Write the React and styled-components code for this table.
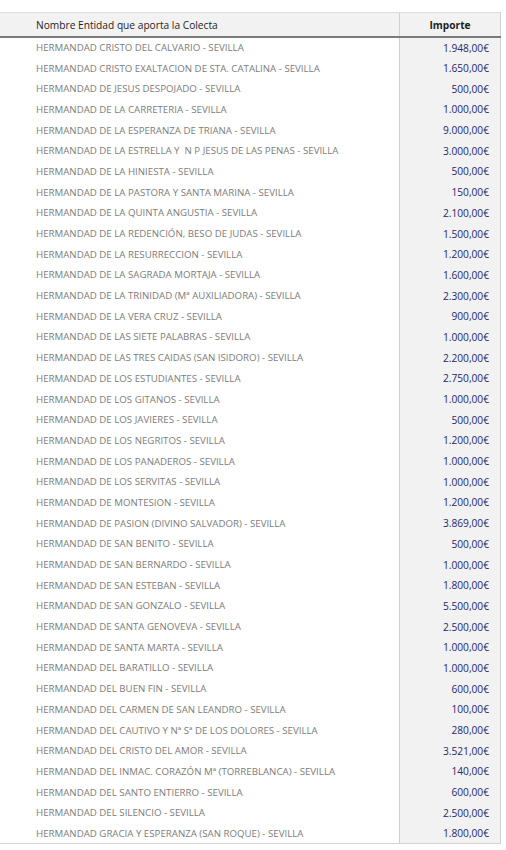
import React from 'react';
import styled, { createGlobalStyle } from 'styled-components';

const GlobalStyle = createGlobalStyle`
  html, body {
    margin: 0;
    padding: 0;
    background: #fff;
  }
  body {
    font-family: "Open Sans", "Liberation Sans", sans-serif;
  }
`;

const Page = styled.div`
  padding-top: 12px;
`;

const Table = styled.table`
  width: 501px;
  border-collapse: collapse;
  table-layout: fixed;
  font-size: 9.7px;
`;

const HeadCell = styled.th`
  height: 23px;
  padding: ${(p) => (p.$amount ? '0' : '0 0 0 36px')};
  background: #f2f2f2;
  border-top: 1px solid #dcdcdc;
  border-bottom: 2px solid #7a7a7a;
  border-left: ${(p) => (p.$amount ? '1px solid #cfcfcf' : 'none')};
  border-right: ${(p) => (p.$amount ? '1px solid #cfcfcf' : 'none')};
  text-align: ${(p) => (p.$amount ? 'center' : 'left')};
  font-weight: ${(p) => (p.$amount ? 700 : 400)};
  font-size: 10.2px;
  color: #1e1e1e;
  width: ${(p) => (p.$amount ? '100px' : 'auto')};
`;

const Row = styled.tr`
  height: 20.7px;
  &:last-child td {
    border-bottom: 1px solid #d4d4d4;
  }
`;

const NameCell = styled.td`
  padding: 0 0 0 36px;
  color: #7c7c7c;
  white-space: nowrap;
  overflow: hidden;
`;

const AmountCell = styled.td`
  padding: 0 11px 0 0;
  text-align: right;
  color: #27276e;
  background: #f2f2f2;
  border-left: 1px solid #cfcfcf;
  border-right: 1px solid #cfcfcf;
  font-size: 10.2px;
`;

const rows = [
  ['HERMANDAD CRISTO DEL CALVARIO - SEVILLA', '1.948,00€'],
  ['HERMANDAD CRISTO EXALTACION DE STA. CATALINA - SEVILLA', '1.650,00€'],
  ['HERMANDAD DE JESUS DESPOJADO - SEVILLA', '500,00€'],
  ['HERMANDAD DE LA CARRETERIA - SEVILLA', '1.000,00€'],
  ['HERMANDAD DE LA ESPERANZA DE TRIANA - SEVILLA', '9.000,00€'],
  ['HERMANDAD DE LA ESTRELLA Y \u00a0N P JESUS DE LAS PENAS - SEVILLA', '3.000,00€'],
  ['HERMANDAD DE LA HINIESTA - SEVILLA', '500,00€'],
  ['HERMANDAD DE LA PASTORA Y SANTA MARINA - SEVILLA', '150,00€'],
  ['HERMANDAD DE LA QUINTA ANGUSTIA - SEVILLA', '2.100,00€'],
  ['HERMANDAD DE LA REDENCIÓN, BESO DE JUDAS - SEVILLA', '1.500,00€'],
  ['HERMANDAD DE LA RESURRECCION - SEVILLA', '1.200,00€'],
  ['HERMANDAD DE LA SAGRADA MORTAJA - SEVILLA', '1.600,00€'],
  ['HERMANDAD DE LA TRINIDAD (Mª AUXILIADORA) - SEVILLA', '2.300,00€'],
  ['HERMANDAD DE LA VERA CRUZ - SEVILLA', '900,00€'],
  ['HERMANDAD DE LAS SIETE PALABRAS - SEVILLA', '1.000,00€'],
  ['HERMANDAD DE LAS TRES CAIDAS (SAN ISIDORO) - SEVILLA', '2.200,00€'],
  ['HERMANDAD DE LOS ESTUDIANTES - SEVILLA', '2.750,00€'],
  ['HERMANDAD DE LOS GITANOS - SEVILLA', '1.000,00€'],
  ['HERMANDAD DE LOS JAVIERES - SEVILLA', '500,00€'],
  ['HERMANDAD DE LOS NEGRITOS - SEVILLA', '1.200,00€'],
  ['HERMANDAD DE LOS PANADEROS - SEVILLA', '1.000,00€'],
  ['HERMANDAD DE LOS SERVITAS - SEVILLA', '1.000,00€'],
  ['HERMANDAD DE MONTESION - SEVILLA', '1.200,00€'],
  ['HERMANDAD DE PASION (DIVINO SALVADOR) - SEVILLA', '3.869,00€'],
  ['HERMANDAD DE SAN BENITO - SEVILLA', '500,00€'],
  ['HERMANDAD DE SAN BERNARDO - SEVILLA', '1.000,00€'],
  ['HERMANDAD DE SAN ESTEBAN - SEVILLA', '1.800,00€'],
  ['HERMANDAD DE SAN GONZALO - SEVILLA', '5.500,00€'],
  ['HERMANDAD DE SANTA GENOVEVA - SEVILLA', '2.500,00€'],
  ['HERMANDAD DE SANTA MARTA - SEVILLA', '1.000,00€'],
  ['HERMANDAD DEL BARATILLO - SEVILLA', '1.000,00€'],
  ['HERMANDAD DEL BUEN FIN - SEVILLA', '600,00€'],
  ['HERMANDAD DEL CARMEN DE SAN LEANDRO - SEVILLA', '100,00€'],
  ['HERMANDAD DEL CAUTIVO Y Nª Sª DE LOS DOLORES - SEVILLA', '280,00€'],
  ['HERMANDAD DEL CRISTO DEL AMOR - SEVILLA', '3.521,00€'],
  ['HERMANDAD DEL INMAC. CORAZÓN Mª (TORREBLANCA) - SEVILLA', '140,00€'],
  ['HERMANDAD DEL SANTO ENTIERRO - SEVILLA', '600,00€'],
  ['HERMANDAD DEL SILENCIO - SEVILLA', '2.500,00€'],
  ['HERMANDAD GRACIA Y ESPERANZA (SAN ROQUE) - SEVILLA', '1.800,00€'],
];

export default function App() {
  return (
    <Page>
      <GlobalStyle />
      <Table>
        <thead>
          <tr>
            <HeadCell>Nombre Entidad que aporta la Colecta</HeadCell>
            <HeadCell $amount>Importe</HeadCell>
          </tr>
        </thead>
        <tbody>
          {rows.map(([name, amount]) => (
            <Row key={name}>
              <NameCell>{name}</NameCell>
              <AmountCell>{amount}</AmountCell>
            </Row>
          ))}
        </tbody>
      </Table>
    </Page>
  );
}
